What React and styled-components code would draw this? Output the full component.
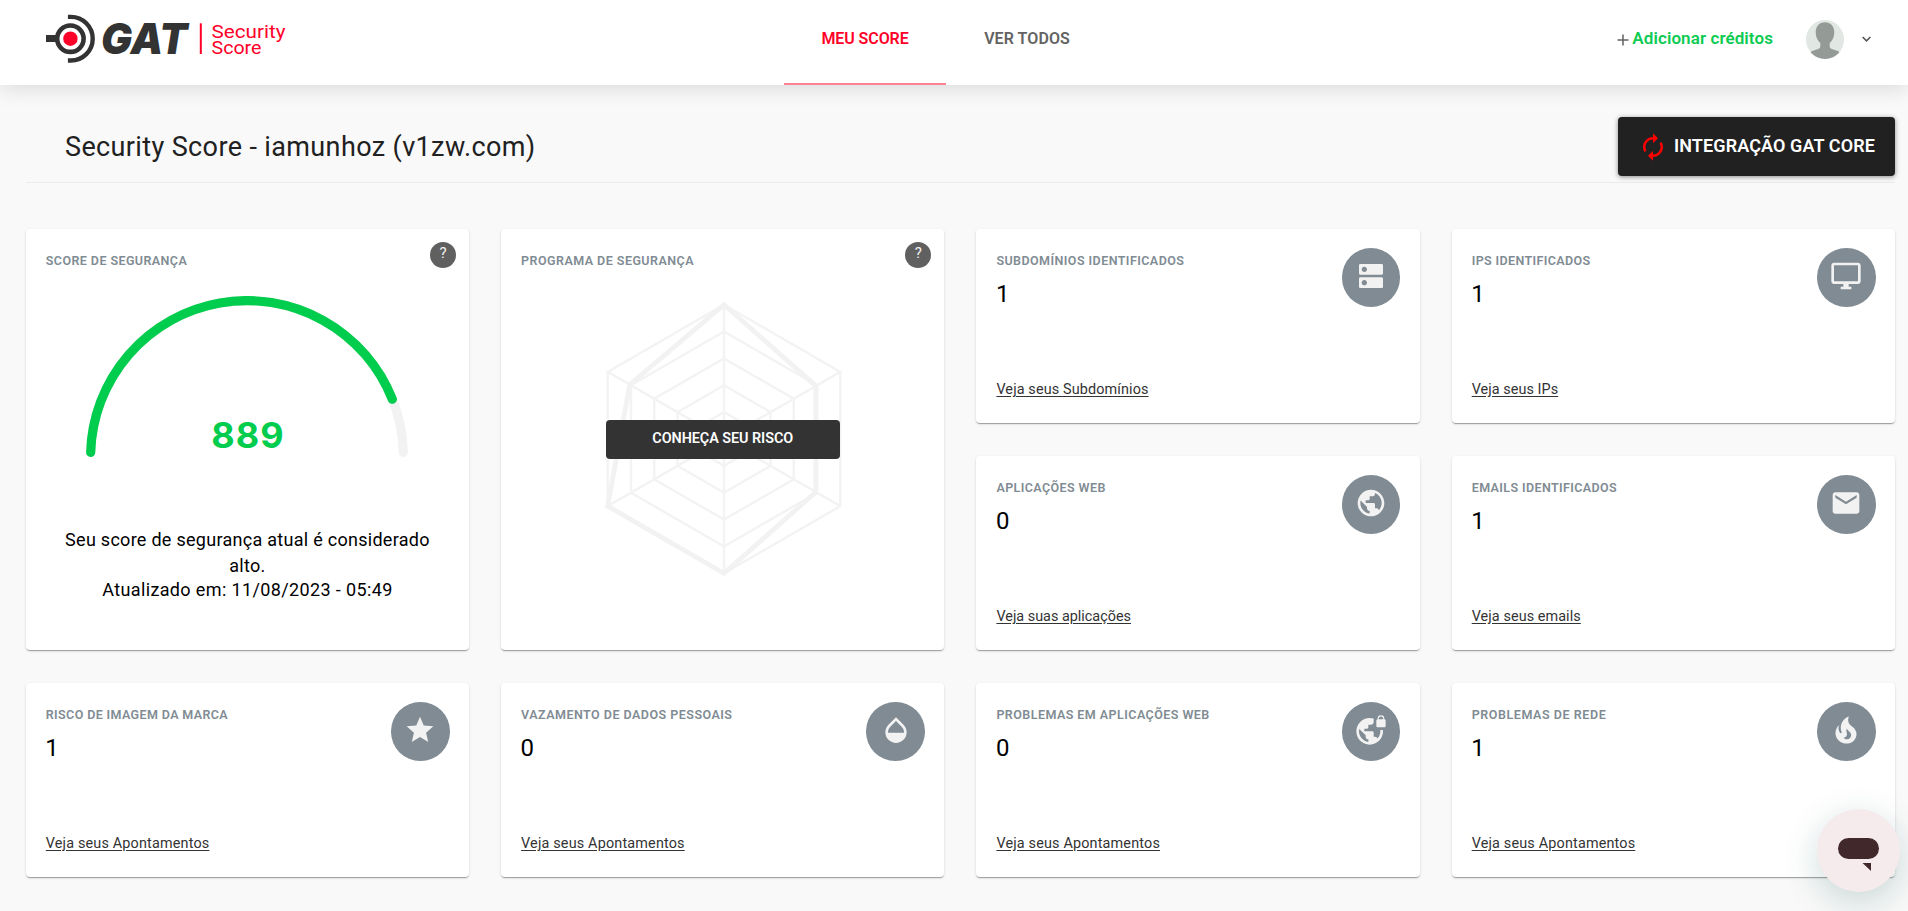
import React from "react";
import styled, { createGlobalStyle } from "styled-components";
import {
  MdAutorenew,
  MdDns,
  MdEmail,
  MdOpacity,
  MdOutlineDesktopWindows,
  MdPublic,
  MdStar,
  MdVpnLock,
} from "react-icons/md";

const GlobalStyle = createGlobalStyle`
  *, *::before, *::after { box-sizing: border-box; }
  body {
    margin: 0;
    background: #f9f9f9;
    color: #000;
    font-family: Roboto, "Liberation Sans", sans-serif;
  }
`;

const Page = styled.div`
  min-height: 911px;
  overflow: hidden;
`;

/* ---------- header ---------- */

const Header = styled.header`
  position: relative;
  display: grid;
  grid-template-columns: 784px auto 1fr;
  height: 85px;
  background: #fff;
  box-shadow: 0 4px 20px rgba(0, 0, 0, 0.12);
`;

const Brand = styled.div`
  padding: 12px 0 0 44px;
  svg { display: block; }
`;

const Tabs = styled.nav`
  display: flex;
`;

const Tab = styled.a`
  width: 162px;
  height: 85px;
  padding-top: 28px;
  border-bottom: 2px solid ${(p) => (p.$active ? "#ff8196" : "transparent")};
  color: ${(p) => (p.$active ? "#ff0028" : "#636363")};
  font-size: 16px;
  font-weight: 600;
  line-height: 21px;
  letter-spacing: ${(p) => p.$track}px;
  text-align: center;
`;

const Account = styled.div`
  display: flex;
  align-items: flex-start;
  justify-content: flex-end;
  padding: 20px 37px 0 0;
`;

const Credits = styled.a`
  display: flex;
  align-items: center;
  gap: 3px;
  margin: 7px 33px 0 0;
  color: #0ccb52;
  font-size: 17px;
  font-weight: 600;
  line-height: 22px;
  letter-spacing: 0.09px;
  svg { margin-top: 3px; }
`;

const Avatar = styled.svg`
  display: block;
  width: 38px;
  height: 39px;
`;

const Chevron = styled.svg`
  margin: 15px 0 0 18px;
`;

/* ---------- title bar ---------- */

const TitleBar = styled.div`
  display: flex;
  justify-content: space-between;
  align-items: flex-start;
  height: 98px;
  margin: 0 13px 0 26px;
  padding: 32px 0 0 37px;
  border-bottom: 1px solid #ebebeb;
`;

const PageTitle = styled.h1`
  margin: 13px 0 0 2px;
  color: #212121;
  font-size: 27px;
  font-weight: 400;
  line-height: 35px;
  letter-spacing: 0.37px;
`;

const IntegrationButton = styled.button`
  display: flex;
  align-items: center;
  gap: 6px;
  width: 277px;
  height: 59px;
  padding: 0 0 2px 20px;
  border: 0;
  border-radius: 4px;
  background: #212121;
  box-shadow: 0 1px 5px rgba(0, 0, 0, 0.45);
  color: #fff;
  font-family: inherit;
  font-size: 18px;
  font-weight: 600;
  letter-spacing: 0.1px;
  svg { color: #f00; margin-top: 2px; }
`;

/* ---------- cards ---------- */

const Board = styled.main`
  display: grid;
  grid-template-columns: repeat(4, 1fr);
  grid-auto-rows: 194px;
  gap: 33px 32px;
  padding: 46px 13px 0 25.8px;
`;

const Card = styled.section`
  display: flex;
  flex-direction: column;
  grid-row: span ${(p) => p.$rows || 1};
  padding: ${(p) => (p.$rows ? "13px 13px 0 20px" : "19px 19.5px 24px 20px")};
  border-radius: 4px;
  background: #fff;
  box-shadow: 0 2px 1px -1px rgba(0, 0, 0, 0.2), 0 1px 1px rgba(0, 0, 0, 0.14),
    0 1px 3px rgba(0, 0, 0, 0.12);
`;

const CardTop = styled.div`
  display: flex;
  justify-content: space-between;
  align-items: flex-start;
`;

const Label = styled.h2`
  margin: ${(p) => p.$drop || 5}px 0 0;
  color: #808b93;
  font-size: 12.5px;
  font-weight: 600;
  line-height: 16px;
  letter-spacing: ${(p) => p.$track}px;
`;

const Count = styled.div`
  margin: 11px 0 0 -0.5px;
  font-size: 24px;
  line-height: 28px;
`;

const Disc = styled.span`
  display: flex;
  align-items: center;
  justify-content: center;
  width: 58.5px;
  height: 58.5px;
  padding-bottom: 2px;
  border-radius: 50%;
  background: #808b93;
  color: #f2f2f2;
`;

const CardLink = styled.a`
  align-self: flex-start;
  margin-top: auto;
  color: #333;
  font-size: 14.4px;
  line-height: 18px;
  letter-spacing: ${(p) => p.$track}px;
  text-decoration: underline;
  text-underline-offset: 1.5px;
`;

const Help = styled.span`
  width: 26px;
  height: 26px;
  border-radius: 50%;
  background: #606060;
  color: #f2f2f2;
  font-size: 15px;
  line-height: 23px;
  text-align: center;
`;

const Gauge = styled.div`
  display: grid;
  justify-items: center;
  margin: 27px 7px 0 -1px;
  > * { grid-area: 1 / 1; }
`;

const Score = styled.strong`
  align-self: end;
  margin-bottom: 1px;
  padding-left: 2px;
  color: #00cc4e;
  font-family: Inter, sans-serif;
  font-size: 36px;
  font-weight: 700;
  line-height: 42px;
  letter-spacing: 1px;
`;

const Summary = styled.p`
  margin: ${(p) => p.$top}px 7px 0 0;
  padding: 0 16px;
  font-size: 18px;
  line-height: ${(p) => p.$leading}px;
  letter-spacing: ${(p) => p.$track}px;
  text-align: center;
`;

const Radar = styled.div`
  display: grid;
  place-items: center;
  margin: 30px 5px 0 0;
  > * { grid-area: 1 / 1; }
`;

const RiskButton = styled.button`
  width: 234px;
  height: 39px;
  padding: 0 0 2px;
  margin-right: 2px;
  border: 0;
  border-radius: 4px;
  background: #333;
  color: #fff;
  font-family: inherit;
  font-size: 14.4px;
  font-weight: 600;
  letter-spacing: -0.05px;
`;

const ChatBubble = styled.button`
  position: fixed;
  right: 8px;
  bottom: 19px;
  width: 83px;
  height: 83px;
  padding: 0;
  border: 0;
  border-radius: 50%;
  background: #f5ebec;
  box-shadow: 0 10px 36px rgba(0, 77, 77, 0.2);
  svg { display: block; }
`;

const Logo = () => (
  <svg width="250" height="52" viewBox="44 12 250 52">
    <rect x="46" y="35" width="11" height="7" fill="#333" />
    <circle cx="70.4" cy="38.7" r="13.2" fill="none" stroke="#333" strokeWidth="4.6" />
    <circle cx="70.4" cy="38.7" r="7.2" fill="#ff0028" />
    <path d="M67.9 16.9h3a21.8 21.8 0 0 1 0 43.6h-3" fill="none" stroke="#333" strokeWidth="4.4" />
    <text
      x="101" y="54" fill="#333" fontFamily="Inter, sans-serif" fontSize="42.6"
      fontWeight="900" fontStyle="italic" textLength="86.5" lengthAdjust="spacingAndGlyphs"
    >GAT</text>
    <rect x="199.8" y="23.3" width="2" height="30.7" fill="#ff0028" />
    <text x="211.5" y="37.8" fill="#ff0028" fontSize="19" textLength="74" lengthAdjust="spacingAndGlyphs">Security</text>
    <text x="211.5" y="54" fill="#ff0028" fontSize="19" textLength="50" lengthAdjust="spacingAndGlyphs">Score</text>
  </svg>
);

const FireIcon = () => (
  <svg width="36" height="36" viewBox="0 0 24 24" fill="currentColor">
    <path d="M17.660 11.200c-.230-.300-.510-.560-.770-.820-.670-.600-1.430-1.030-2.070-1.660C13.330 7.260 13 4.850 13.950 3c-.950.230-1.780.750-2.490 1.320-2.590 2.080-3.610 5.750-2.390 8.900.040.100.080.200.080.330 0 .220-.150.420-.350.500-.230.100-.470.040-.660-.120a.580.580 0 0 1-.140-.170c-1.130-1.430-1.310-3.480-.550-5.120C5.780 10 4.870 12.300 5 14.470c.060.500.120 1 .290 1.500.140.600.410 1.200.710 1.730 1.080 1.730 2.950 2.970 4.960 3.220 2.140.270 4.430-.120 6.070-1.600 1.830-1.660 2.470-4.320 1.530-6.600l-.130-.260c-.210-.460-.770-1.260-.770-1.260m-3.160 6.300c-.280.240-.740.500-1.100.600-1.120.400-2.240-.160-2.900-.820 1.190-.280 1.900-1.160 2.110-2.050.170-.800-.150-1.460-.280-2.230-.120-.740-.100-1.370.170-2.060.190.380.390.760.630 1.060.770 1 1.980 1.440 2.240 2.800.040.140.060.280.060.430.030.820-.330 1.720-.930 2.270z" />
  </svg>
);

const polar = (cx, cy, r, deg) => {
  const a = (deg * Math.PI) / 180;
  return [cx + r * Math.cos(a), cy - r * Math.sin(a)];
};

const arc = (from, to) => {
  const [x1, y1] = polar(161, 161, 156.4, from);
  const [x2, y2] = polar(161, 161, 156.4, to);
  return `M${x1} ${y1}A156.4 156.4 0 0 1 ${x2} ${y2}`;
};

/* Degrees taken up by the rounded end of the gauge stroke. */
const CAP = 1.7;

const GaugeArc = ({ value }) => (
  <svg width="322" height="161" viewBox="0 0 322 161" fill="none" strokeWidth="9.2" strokeLinecap="round">
    <path d={arc(180 - CAP, CAP)} stroke="#f2f2f2" />
    <path d={arc(180 - CAP, 180 - (value / 1000) * 180 + CAP)} stroke="#00cc4e" />
  </svg>
);

const hexagon = (radii) =>
  radii.map((r, i) => polar(120, 140, r * 134.3, 90 - i * 60).join(",")).join(" ");

const RadarWeb = () => (
  <svg width="240" height="280" viewBox="0 0 240 280" fill="none" stroke="#f3f3f3" strokeWidth="2.4">
    {[0.2, 0.4, 0.6, 0.8, 1].map((r) => (
      <polygon key={r} points={hexagon(Array(6).fill(r))} />
    ))}
    {[90, 30, -30].map((deg) => {
      const [x1, y1] = polar(120, 140, 134.3, deg);
      const [x2, y2] = polar(120, 140, 134.3, deg + 180);
      return <line key={deg} x1={x1} y1={y1} x2={x2} y2={y2} />;
    })}
    <polygon points={hexagon([1, 0.79, 0.79, 1, 1, 0.81])} stroke="#f2f2f2" strokeWidth="4.8" />
  </svg>
);

const METRICS = [
  { label: "SUBDOMÍNIOS IDENTIFICADOS", track: 0.44, count: 1, link: "Veja seus Subdomínios", linkTrack: 0.13, Icon: MdDns },
  { label: "IPS IDENTIFICADOS", track: 0.38, count: 1, link: "Veja seus IPs", linkTrack: 0.06, Icon: MdOutlineDesktopWindows },
  { label: "APLICAÇÕES WEB", track: 0.41, count: 0, link: "Veja suas aplicações", linkTrack: 0, Icon: MdPublic },
  { label: "EMAILS IDENTIFICADOS", track: 0.39, count: 1, link: "Veja seus emails", linkTrack: 0.08, Icon: MdEmail },
  { label: "RISCO DE IMAGEM DA MARCA", track: 0.38, count: 1, link: "Veja seus Apontamentos", linkTrack: 0.17, Icon: MdStar },
  { label: "VAZAMENTO DE DADOS PESSOAIS", track: 0.48, count: 0, link: "Veja seus Apontamentos", linkTrack: 0.17, Icon: MdOpacity },
  { label: "PROBLEMAS EM APLICAÇÕES WEB", track: 0.45, count: 0, link: "Veja seus Apontamentos", linkTrack: 0.17, Icon: MdVpnLock },
  { label: "PROBLEMAS DE REDE", track: 0.57, count: 1, link: "Veja seus Apontamentos", linkTrack: 0.17, Icon: FireIcon },
];

const MetricCard = ({ label, track, count, link, linkTrack, Icon }) => (
  <Card>
    <CardTop>
      <div>
        <Label $track={track}>{label}</Label>
        <Count>{count}</Count>
      </div>
      <Disc><Icon size={32} /></Disc>
    </CardTop>
    <CardLink $track={linkTrack}>{link}</CardLink>
  </Card>
);

export default function App() {
  return (
    <Page>
      <GlobalStyle />
      <Header>
        <Brand><Logo /></Brand>
        <Tabs>
          <Tab $active $track={-0.08}>MEU SCORE</Tab>
          <Tab $track={0.07}>VER TODOS</Tab>
        </Tabs>
        <Account>
          <Credits>
            <svg width="12" height="12" viewBox="0 0 12 12" stroke="#636363" strokeWidth="1.5">
              <path d="M6 .5v11M.5 6h11" />
            </svg>
            Adicionar créditos
          </Credits>
          <Avatar viewBox="0 0 38 39">
            <clipPath id="avatar-clip"><ellipse cx="19" cy="19.5" rx="19" ry="19.5" /></clipPath>
            <g clipPath="url(#avatar-clip)">
              <rect width="38" height="39" fill="#e1e7e3" />
              <path
                d="M19 2.200c5.600 0 9.300 4.200 9.300 9.800 0 4.800-1.800 8.600-4.600 11v3.200c0 2.200 1.700 2.900 4.500 3.600 3 .8 5.300 1.700 6.800 4V39H3v-5.200c1.500-2.300 3.800-3.200 6.800-4 2.800-.7 4.500-1.400 4.500-3.600V23c-2.800-2.400-4.600-6.200-4.600-11 0-5.600 3.700-9.800 9.300-9.800z"
                fill="#949a95"
              />
            </g>
          </Avatar>
          <Chevron width="9" height="8" viewBox="0 0 9 8" fill="none" stroke="#555" strokeWidth="1.6">
            <path d="M.6 2l3.900 3.800L8.400 2" />
          </Chevron>
        </Account>
      </Header>

      <TitleBar>
        <PageTitle>Security Score - iamunhoz (v1zw.com)</PageTitle>
        <IntegrationButton><MdAutorenew size={30} />INTEGRAÇÃO GAT CORE</IntegrationButton>
      </TitleBar>

      <Board>
        <Card $rows={2}>
          <CardTop>
            <Label $drop={11} $track={0.42}>SCORE DE SEGURANÇA</Label>
            <Help>?</Help>
          </CardTop>
          <Gauge>
            <GaugeArc value={889} />
            <Score>889</Score>
          </Gauge>
          <Summary $top={70} $leading={26} $track={0.28}>
            Seu score de segurança atual é considerado alto.
          </Summary>
          <Summary $top={-1} $leading={24} $track={0.37}>
            Atualizado em: 11/08/2023 - 05:49
          </Summary>
        </Card>
        <Card $rows={2}>
          <CardTop>
            <Label $drop={11} $track={0.46}>PROGRAMA DE SEGURANÇA</Label>
            <Help>?</Help>
          </CardTop>
          <Radar>
            <RadarWeb />
            <RiskButton>CONHEÇA SEU RISCO</RiskButton>
          </Radar>
        </Card>
        {METRICS.map((m) => <MetricCard key={m.label} {...m} />)}
      </Board>

      <ChatBubble aria-label="Chat">
        <svg width="83" height="83" viewBox="0 0 83 83" fill="#40282b">
          <rect x="21" y="29" width="41" height="21" rx="10.5" />
          <path d="M45.5 54h8.500v8z" />
        </svg>
      </ChatBubble>
    </Page>
  );
}
